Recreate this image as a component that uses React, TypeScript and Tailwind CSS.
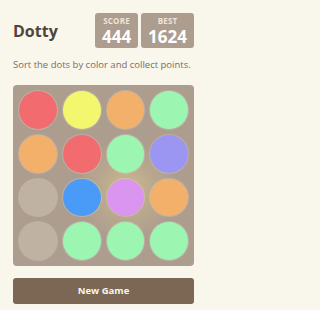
import React from "react";

const C = {
  r: "#f26b6e",
  y: "#f2f76e",
  o: "#f2b06b",
  g: "#9cf5b1",
  p: "#9a96f2",
  e: "#c0b2a3",
  b: "#4a9bf7",
  k: "#d995f0",
};

const grid: string[] = [
  C.r, C.y, C.o, C.g,
  C.o, C.r, C.g, C.p,
  C.e, C.b, C.k, C.o,
  C.e, C.g, C.g, C.g,
];

function ScoreBox({ label, value }: { label: string; value: string }) {
  return (
    <div className="flex flex-col items-center justify-center rounded-[3px] bg-[#ad9d8f] h-[35px] px-[7px] min-w-[43px]">
      <div className="text-[8px] font-bold leading-none tracking-[0.2px] text-[#eee4d9]">{label}</div>
      <div className="text-[17px] font-bold leading-none text-white mt-[3px]">{value}</div>
    </div>
  );
}

export default function App() {
  return (
    <div
      className="w-full min-h-[310px] bg-[#f9f6ec] text-[#776e65] overflow-hidden"
      style={{ fontFamily: '"Open Sans", "Noto Sans", sans-serif' }}
    >
      <div className="w-[207px] h-[310px]">
        <div className="flex items-center justify-between pl-[13px] pr-[13px] pt-[13px]">
          <div className="text-[16px] font-bold text-[#4f453c] leading-none mt-[1px]">Dotty</div>
          <div className="flex gap-[3px]">
            <ScoreBox label="SCORE" value="444" />
            <ScoreBox label="BEST" value="1624" />
          </div>
        </div>
        <div className="px-[13px] mt-[12px] text-[9.5px] leading-[10px] text-[#776e65] whitespace-nowrap">
          Sort the dots by color and collect points.
        </div>
        <div className="mx-[13px] mt-[15px] relative rounded-[4px] bg-[#ad9d8f] p-[6px] overflow-hidden">
          <div
            className="absolute inset-0 pointer-events-none"
            style={{
              background:
                "radial-gradient(circle at 63% 58%, rgba(236,214,140,0.5) 0px, rgba(236,214,140,0.22) 25px, rgba(236,214,140,0) 50px)",
            }}
          />
          <div className="relative grid grid-cols-4 gap-[6px]">
            {grid.map((c, i) => (
              <div
                key={i}
                className="aspect-square rounded-full ring-1 ring-[#ffffff30]"
                style={{ backgroundColor: c }}
              />
            ))}
          </div>
        </div>
        <div className="mx-[13px] mt-[12px] h-[26px] rounded-[3px] bg-[#7b6753] flex items-center justify-center text-[9.5px] font-bold text-[#f9f6f2]">
          New Game
        </div>
      </div>
    </div>
  );
}
